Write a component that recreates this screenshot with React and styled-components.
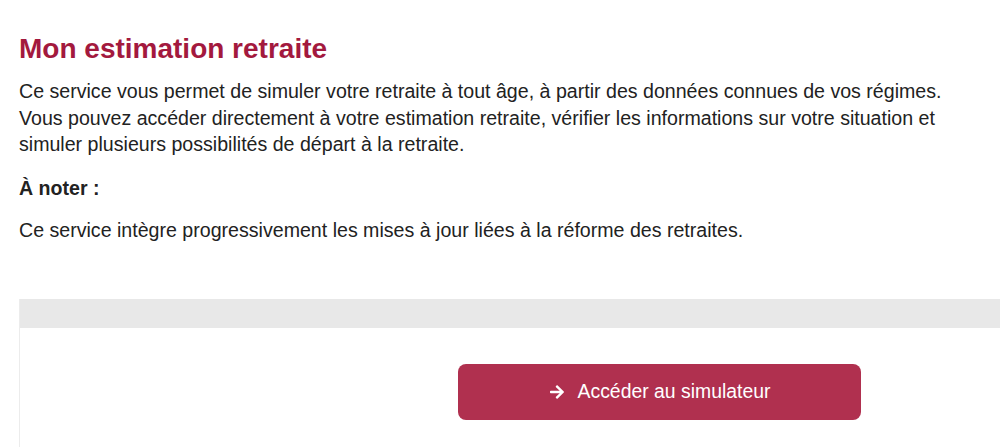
import React from 'react';
import styled, { createGlobalStyle } from 'styled-components';
import { FaArrowRight } from 'react-icons/fa';

const GlobalStyle = createGlobalStyle`
  html, body {
    margin: 0;
    padding: 0;
    background: #ffffff;
    overflow: hidden;
  }
  body {
    font-family: "Liberation Sans", Arial, Helvetica, sans-serif;
    color: #222222;
  }
`;

const Page = styled.main`
  padding: 32px 0 0 19px;
`;

const Title = styled.h1`
  margin: 0 0 12px;
  font-size: 28px;
  line-height: 34px;
  font-weight: 700;
  color: #a3193e;
`;

const Text = styled.p`
  margin: 0 0 ${({ gap }) => gap || 0}px;
  font-size: 19.6px;
  line-height: 26.6px;
  font-weight: ${({ bold }) => (bold ? 700 : 400)};
`;

// la carte continue au-delà du bord droit
const Card = styled.section`
  margin-top: 55px;
  border-left: 1px solid #ececec;
`;

const CardHeader = styled.div`
  height: 29px;
  background: #e8e8e8;
`;

const CardBody = styled.div`
  display: flex;
  padding: 36px 0 40px 438px;
`;

const Button = styled.button`
  display: flex;
  align-items: center;
  justify-content: center;
  gap: 13px;
  width: 403px;
  height: 56px;
  border: none;
  border-radius: 8px;
  background: #b0304f;
  color: #ffffff;
  font-family: "Liberation Sans", Arial, Helvetica, sans-serif;
  font-size: 19.4px;
  cursor: pointer;

  svg {
    width: 16px;
    height: 16px;
  }
`;

export default function App() {
  return (
    <>
      <GlobalStyle />
      <Page>
        <Title>Mon estimation retraite</Title>
        <Text gap={17}>
          Ce service vous permet de simuler votre retraite à tout âge, à partir des données connues de vos régimes.
          <br />
          Vous pouvez accéder directement à votre estimation retraite, vérifier les informations sur votre situation et
          <br />
          simuler plusieurs possibilités de départ à la retraite.
        </Text>
        <Text bold gap={16}>À noter :</Text>
        <Text>Ce service intègre progressivement les mises à jour liées à la réforme des retraites.</Text>
        <Card>
          <CardHeader />
          <CardBody>
            <Button>
              <FaArrowRight />
              Accéder au simulateur
            </Button>
          </CardBody>
        </Card>
      </Page>
    </>
  );
}
